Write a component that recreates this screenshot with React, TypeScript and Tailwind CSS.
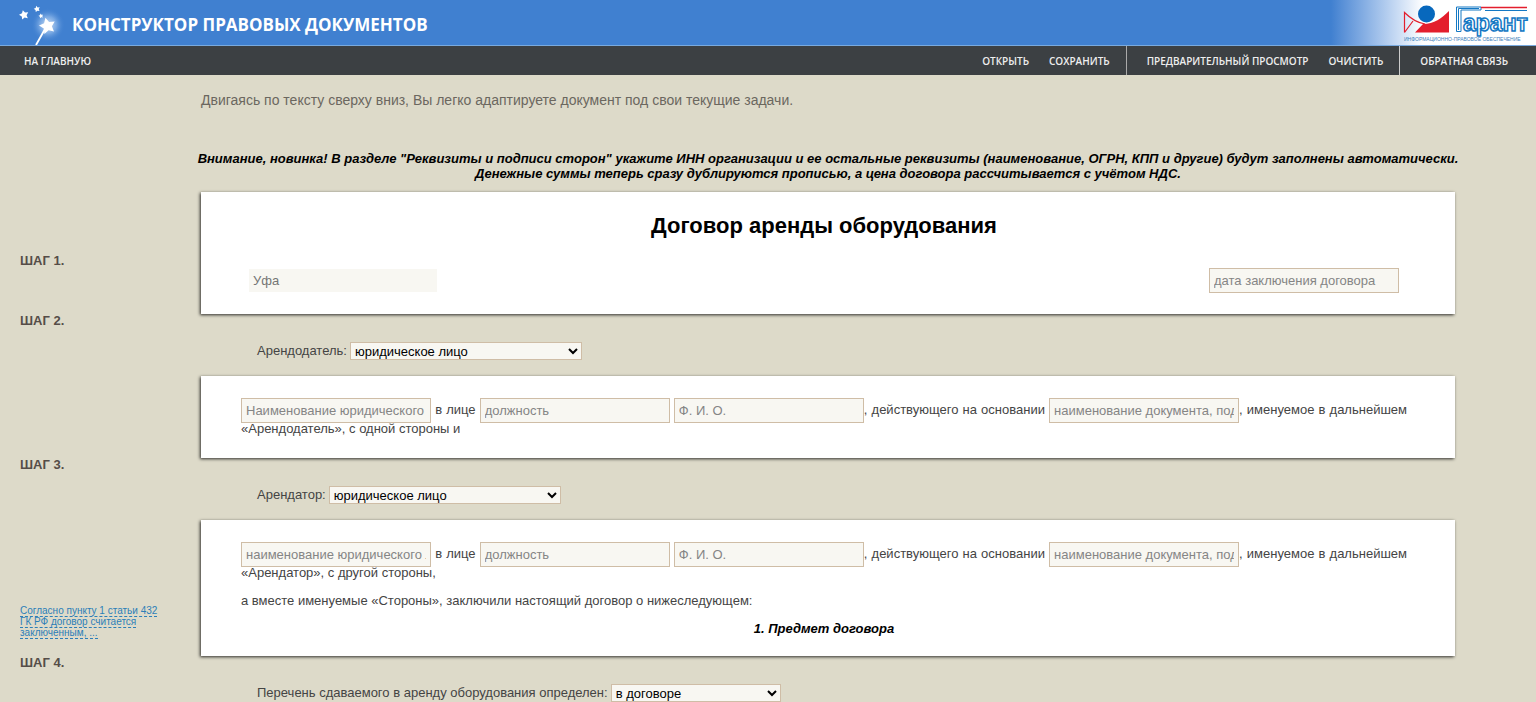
import React from 'react';

const fieldClass =
  'h-[25px] w-[190px] border border-[#cfbda6] bg-[#f8f7f2] px-1 text-[13px] text-[#757575] placeholder:text-[#858585] outline-none';

const Field = ({ label }: { label: string }) => (
  <input type="text" aria-label={label} placeholder={label} className={`${fieldClass} -my-0.5 align-middle`} />
);

const Card = ({ children, className = '' }: { children: React.ReactNode; className?: string }) => (
  <div className={`bg-white shadow-[-1px_1px_3px_rgba(0,0,0,0.8)] ${className}`}>{children}</div>
);

type StepProps = {
  number: number;
  note?: React.ReactNode;
  children: React.ReactNode;
};

const Step = ({ number, note, children }: StepProps) => (
  <section className="grid grid-cols-[181px_minmax(0,1fr)]">
    <aside className="flex flex-col justify-between">
      <h2 className="leading-[14px] font-bold text-[#554d48]">ШАГ {number}.</h2>
      {note}
    </aside>
    <div>{children}</div>
  </section>
);

type ChoiceProps = {
  id: string;
  label: string;
  options: string[];
  className: string;
};

const Choice = ({ id, label, options, className }: ChoiceProps) => (
  <div className="flex h-[62px] items-center gap-[3px] pt-3 pl-14">
    <label htmlFor={id}>{label}</label>
    <select id={id} className={`h-[18px] border border-[#cfbda6] bg-[#f8f7f2] text-black ${className}`}>
      {options.map((option) => (
        <option key={option}>{option}</option>
      ))}
    </select>
  </div>
);

// five-pointed star, slightly tilted
const starPoints = (cx: number, cy: number, r: number) =>
  Array.from({ length: 10 }, (_, i) => {
    const radius = i % 2 === 0 ? r : r * 0.52;
    const angle = (Math.PI / 5) * i - Math.PI / 2 - 0.25;
    return `${(cx + radius * Math.cos(angle)).toFixed(1)},${(cy + radius * Math.sin(angle)).toFixed(1)}`;
  }).join(' ');

const WandIcon = () => (
  <svg width="52" height="45" viewBox="0 0 52 45" aria-hidden="true">
    <defs>
      <radialGradient id="glow">
        <stop offset="0" stopColor="#fff" stopOpacity="0.8" />
        <stop offset="0.5" stopColor="#bcd8f8" stopOpacity="0.45" />
        <stop offset="1" stopColor="#4080d0" stopOpacity="0" />
      </radialGradient>
    </defs>
    <circle cx="32" cy="25" r="17" fill="url(#glow)" />
    <path d="M29 29L20 45" stroke="#fff" strokeWidth="1.800" />
    <g fill="#fff">
      <polygon points={starPoints(31.5, 26, 8.5)} />
      <polygon points={starPoints(8, 15, 5)} />
      <polygon points={starPoints(21, 9, 3.3)} />
      <polygon points={starPoints(25, 16, 2.5)} />
    </g>
  </svg>
);

const GarantLogo = () => (
  <svg width="128" height="42" viewBox="0 0 128 42" role="img" aria-label="Гарант">
    <path d="M1.500 30.500V10.500C7 16 13 20.500 22 22M1.500 30.500L10 19" fill="none" stroke="#e31e2d" strokeWidth="1.200" />
    <path d="M12 30.500L20 22C31 22 39 16 46 9V30.500z" fill="#e31e2d" />
    <circle cx="23.500" cy="12" r="8.500" fill="#0768bd" />
    <path d="M53.500 29.500V5H78V8H58V29.500z" fill="#fff" stroke="#1478c4" strokeWidth="1" />
    <path d="M55.500 28V6.500H76" fill="none" stroke="#1478c4" strokeWidth="1" />
    <path d="M78 5.500H124" stroke="#e31e2d" strokeWidth="1.500" />
    <path d="M82 8.500H124" stroke="#1478c4" strokeWidth="1" />
    <text
      x="60"
      y="29"
      fontFamily="Liberation Sans, sans-serif"
      fontSize="23"
      fontWeight="bold"
      fill="#fff"
      stroke="#1478c4"
      strokeWidth="1.500"
    >
      арант
    </text>
    <text x="1" y="39" fontFamily="Liberation Sans, sans-serif" fontSize="5" fill="#3f82bd">
      ИНФОРМАЦИОННО-ПРАВОВОЕ ОБЕСПЕЧЕНИЕ
    </text>
  </svg>
);

const App = () => {
  return (
    <div className="min-h-screen bg-[#dddac9] font-['Liberation_Sans',Arial,sans-serif] text-[13px] leading-4 text-[#444]">
      <header className="flex h-[46px] items-center justify-between border-b border-[#79aadf] bg-[#4080d0]">
        <div className="flex items-center gap-1 pl-4">
          <WandIcon />
          <h1 className="pt-1 font-['Open_Sans','Noto_Sans',sans-serif] text-[17px] font-bold text-white">
            КОНСТРУКТОР ПРАВОВЫХ ДОКУМЕНТОВ
          </h1>
        </div>
        <a
          href="#garant"
          className="flex h-full items-center bg-linear-to-r from-[#4080d0] to-white to-[45%] pr-[5px] pl-[72px]"
        >
          <GarantLogo />
        </a>
      </header>

      <nav className="flex h-[29px] items-center justify-between bg-[#3c4043] pl-6 font-['Open_Sans','Noto_Sans',sans-serif] text-[10px] font-semibold text-[#eee]">
        <a href="#home">НА ГЛАВНУЮ</a>
        <div className="flex h-full">
          <div className="flex items-center gap-5 px-4">
            <button type="button">ОТКРЫТЬ</button>
            <button type="button">СОХРАНИТЬ</button>
          </div>
          <div className="flex items-center gap-5 border-l border-[#aaa] pr-4 pl-5">
            <button type="button">ПРЕДВАРИТЕЛЬНЫЙ ПРОСМОТР</button>
            <button type="button">ОЧИСТИТЬ</button>
          </div>
          <div className="flex items-center border-l border-[#ccc] pr-7 pl-5">
            <a href="#feedback">ОБРАТНАЯ СВЯЗЬ</a>
          </div>
        </div>
      </nav>

      <main className="pr-[81px] pl-5">
        <div className="pt-4 pl-[181px]">
          <p className="text-sm leading-[18px] text-[#6b675f]">
            Двигаясь по тексту сверху вниз, Вы легко адаптируете документ под свои текущие задачи.
          </p>
          <p className="-mx-4 mt-[42px] text-center leading-[15px] font-bold text-black italic">
            Внимание, новинка! В разделе "Реквизиты и подписи сторон" укажите ИНН организации и ее остальные реквизиты
            (наименование, ОГРН, КПП и другие) будут заполнены автоматически.
            <br />
            Денежные суммы теперь сразу дублируются прописью, а цена договора рассчитывается с учётом НДС.
          </p>
        </div>

        <section className="mt-[11px] grid grid-cols-[181px_minmax(0,1fr)]">
          <aside className="pt-[62px]">
            <h2 className="leading-[14px] font-bold text-[#554d48]">ШАГ 1.</h2>
          </aside>
          <Card className="pt-5 pr-12 pb-[21px] pl-10">
            <h2 className="text-center text-[22px] leading-7 font-bold text-black">Договор аренды оборудования</h2>
            <div className="mt-7 flex items-center justify-between px-2">
              <input
                type="text"
                aria-label="Город"
                defaultValue="Уфа"
                className="h-[23px] w-[188px] bg-[#f8f7f2] px-1 text-[13px] text-[#757575] outline-none"
              />
              <input
                type="text"
                aria-label="дата заключения договора"
                placeholder="дата заключения договора"
                className={fieldClass}
              />
            </div>
          </Card>
        </section>

        <Step number={2}>
          <Choice
            id="lessor"
            label="Арендодатель:"
            options={['юридическое лицо', 'физическое лицо', 'индивидуальный предприниматель']}
            className="w-[232px]"
          />
          <Card className="pt-6 pr-12 pb-[21px] pl-10">
            <p className="text-justify">
              <Field label="Наименование юридического лица" /> в лице <Field label="должность" />{' '}
              <Field label="Ф. И. О." />, действующего на основании{' '}
              <Field label="наименование документа, подтверждающего полномочия" />, именуемое в дальнейшем
              «Арендодатель», с одной стороны и
            </p>
          </Card>
        </Step>

        <Step
          number={3}
          note={
            <a href="#note" className="mb-[18px] w-36 text-[10px] leading-[11px] text-[#2c7fb8]">
              <span className="border-b border-dashed border-[#2c7fb8]">
                Согласно пункту 1 статьи 432 ГК РФ договор считается заключенным, ...
              </span>
            </a>
          }
        >
          <Choice
            id="lessee"
            label="Арендатор:"
            options={['юридическое лицо', 'физическое лицо', 'индивидуальный предприниматель']}
            className="w-[232px]"
          />
          <Card className="pt-6 pr-12 pb-[19px] pl-10">
            <p className="text-justify">
              <Field label="наименование юридического лица" /> в лице <Field label="должность" />{' '}
              <Field label="Ф. И. О." />, действующего на основании{' '}
              <Field label="наименование документа, подтверждающего полномочия" />, именуемое в дальнейшем
              «Арендатор», с другой стороны,
            </p>
            <p className="mt-3">а вместе именуемые «Стороны», заключили настоящий договор о нижеследующем:</p>
            <h3 className="mt-3 text-center font-bold text-black italic">1. Предмет договора</h3>
          </Card>
        </Step>

        <Step number={4}>
          <Choice
            id="equipment"
            label="Перечень сдаваемого в аренду оборудования определен:"
            options={['в договоре', 'в приложении']}
            className="w-[170px]"
          />
        </Step>
      </main>
    </div>
  );
};

export default App;
